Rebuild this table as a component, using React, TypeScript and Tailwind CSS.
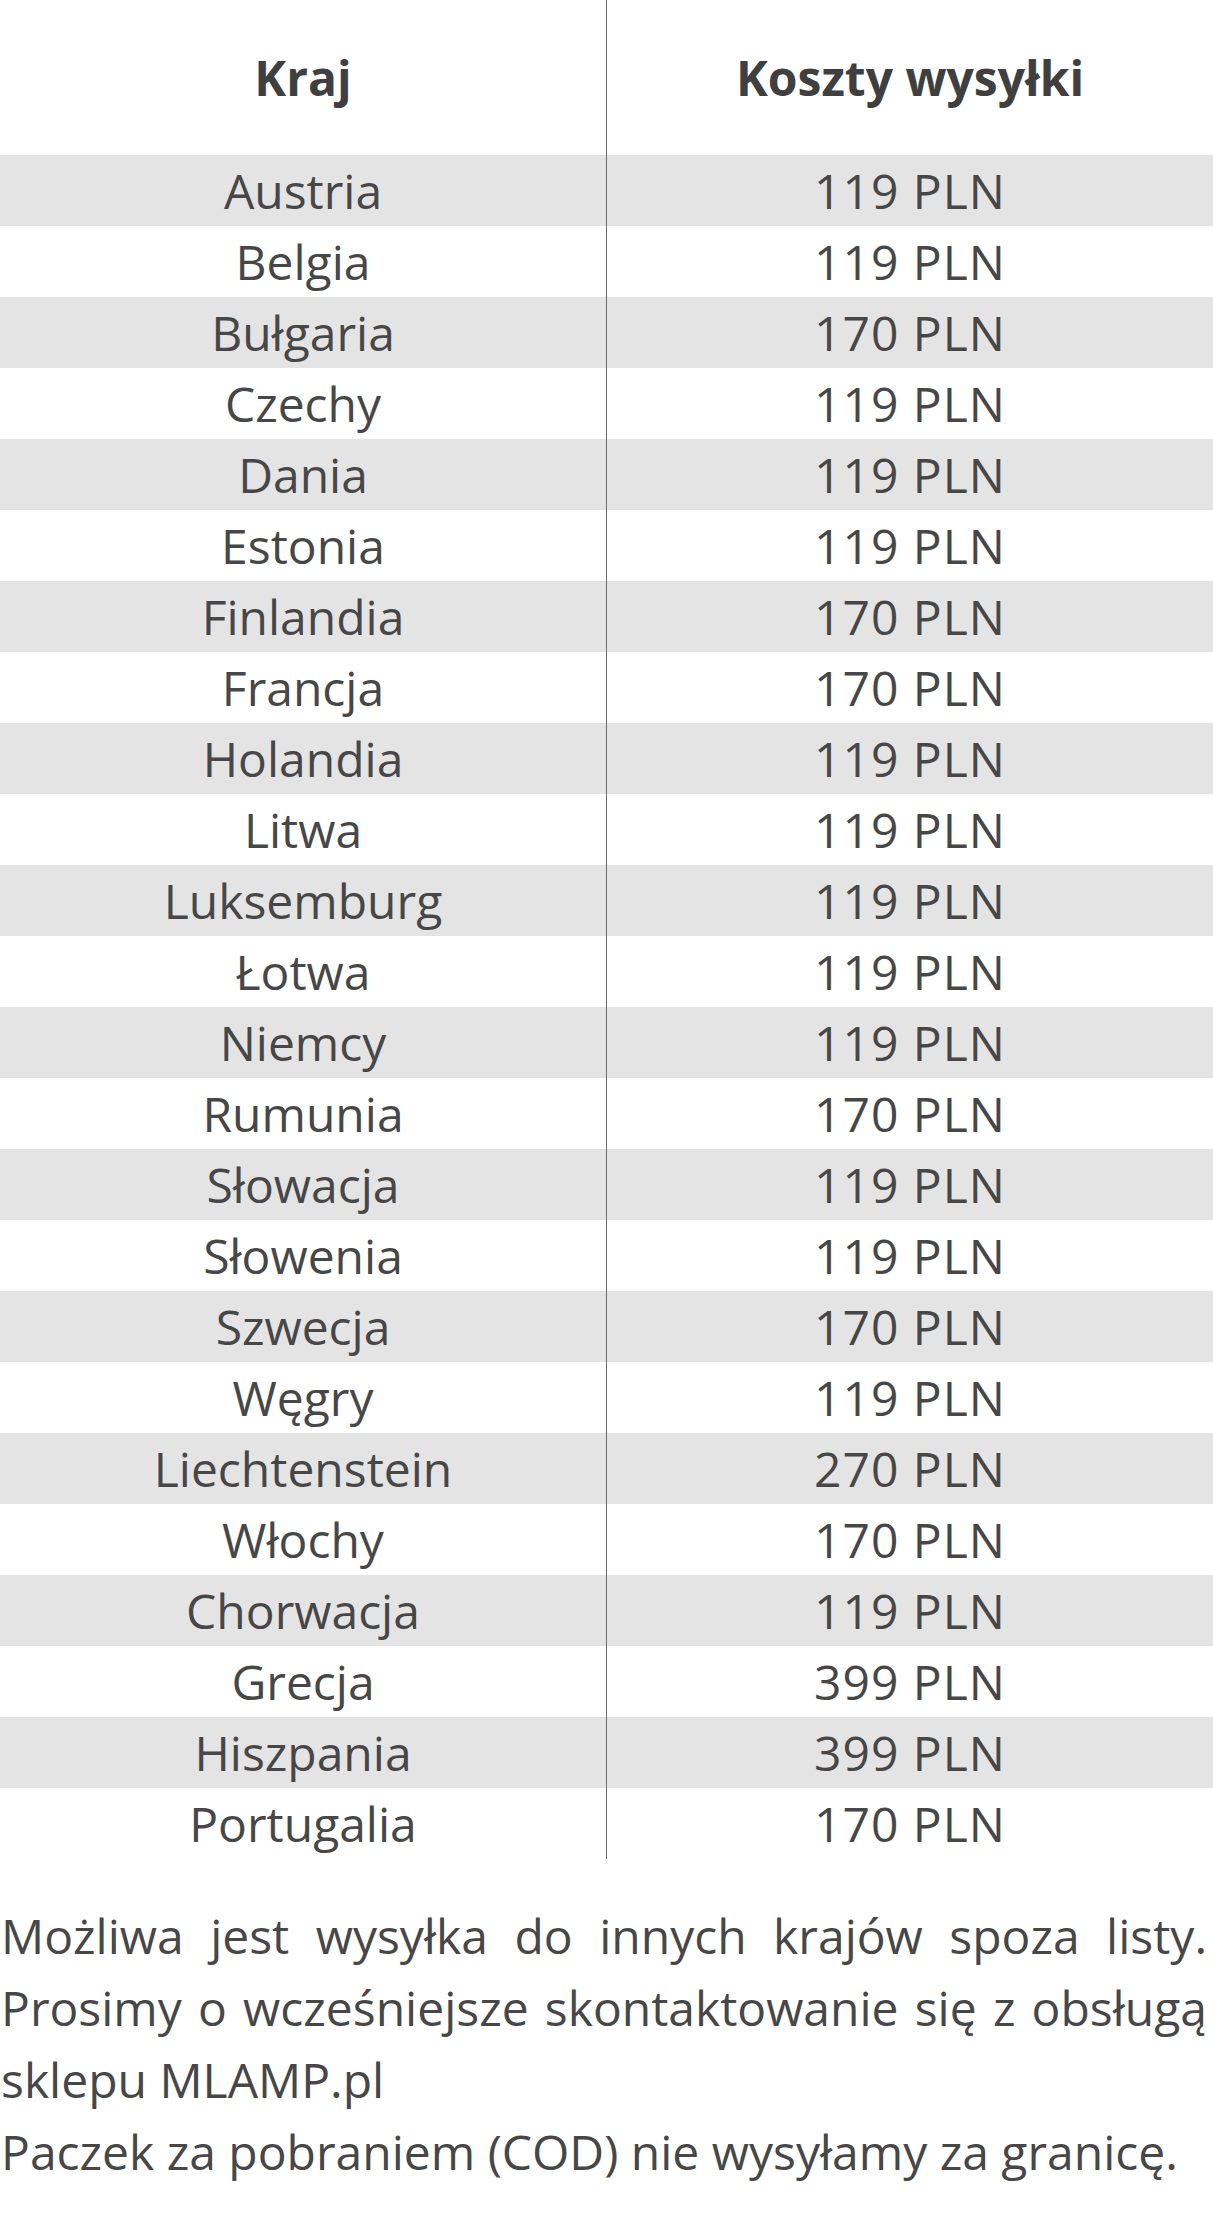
const rows: [string, string][] = [
  ["Austria", "119 PLN"],
  ["Belgia", "119 PLN"],
  ["Bułgaria", "170 PLN"],
  ["Czechy", "119 PLN"],
  ["Dania", "119 PLN"],
  ["Estonia", "119 PLN"],
  ["Finlandia", "170 PLN"],
  ["Francja", "170 PLN"],
  ["Holandia", "119 PLN"],
  ["Litwa", "119 PLN"],
  ["Luksemburg", "119 PLN"],
  ["Łotwa", "119 PLN"],
  ["Niemcy", "119 PLN"],
  ["Rumunia", "170 PLN"],
  ["Słowacja", "119 PLN"],
  ["Słowenia", "119 PLN"],
  ["Szwecja", "170 PLN"],
  ["Węgry", "119 PLN"],
  ["Liechtenstein", "270 PLN"],
  ["Włochy", "170 PLN"],
  ["Chorwacja", "119 PLN"],
  ["Grecja", "399 PLN"],
  ["Hiszpania", "399 PLN"],
  ["Portugalia", "170 PLN"],
]

export default function App() {
  return (
    <div className="w-[1213px] min-h-[2230px] bg-white font-['Open_Sans',_'Noto_Sans',_sans-serif] text-[#474747]">
      <div>
        {/* nagłówek */}
        <div className="flex h-[155px] text-[48px] font-bold text-[#3f3f3f]">
          <div className="flex w-[607px] items-center justify-center border-r border-[#6b6b6b]">Kraj</div>
          <div className="flex flex-1 items-center justify-center">Koszty wysyłki</div>
        </div>
        {rows.map(([country, price], i) => (
          <div key={country} className={`flex h-[71px] text-[48px] ${i % 2 === 0 ? "bg-[#e4e4e4]" : "bg-white"}`}>
            <div className="flex w-[607px] items-center justify-center border-r border-[#6b6b6b]">{country}</div>
            <div className="flex flex-1 items-center justify-center tracking-[1px]">{price}</div>
          </div>
        ))}
      </div>

      <div className="mt-[41px] pl-[1px] pr-[6px] text-[48px] leading-[72px]">
        <p className="whitespace-nowrap text-justify [text-align-last:justify]">Możliwa jest wysyłka do innych krajów spoza listy.</p>
        <p className="whitespace-nowrap text-justify [text-align-last:justify]">Prosimy o wcześniejsze skontaktowanie się z obsługą</p>
        <p>sklepu MLAMP.pl</p>
        <p>Paczek za pobraniem (COD) nie wysyłamy za granicę.</p>
      </div>
    </div>
  )
}
